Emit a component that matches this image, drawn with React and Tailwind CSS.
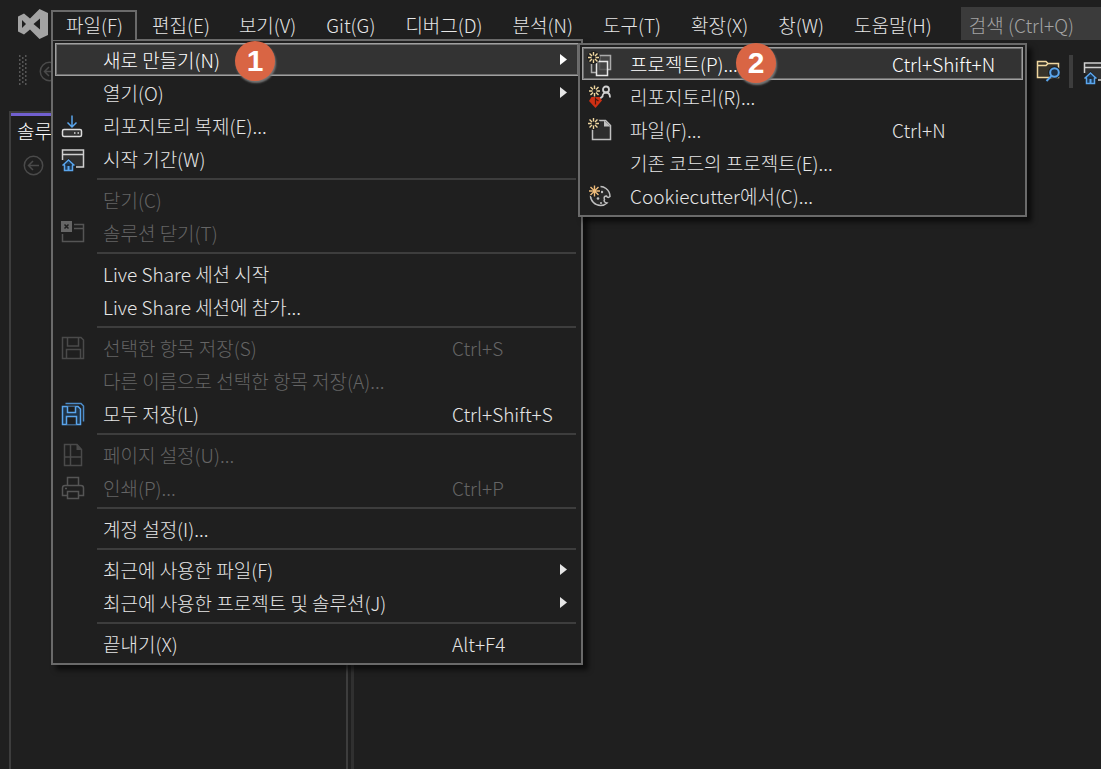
import clsx from "clsx";

const Icon = ({ children, className }) => (
  <svg
    viewBox="0 0 25 25"
    fill="none"
    strokeWidth="1.5"
    aria-hidden="true"
    className={clsx("h-[25px] w-[25px] shrink-0 overflow-visible", className)}
  >
    {children}
  </svg>
);

const Spark = ({ cx, cy, color = "#f0d7a0" }) => (
  <g transform={`translate(${cx} ${cy})`} stroke={color} strokeWidth="1.4">
    <circle r="6.5" fill="#1f1f1f" stroke="none" />
    <path d="M0-5.500V-2M0 5.500V2M-5.500 0H-2M5.500 0H2M-4-4-1.500-1.500M4 4 1.500 1.500M-4 4-1.500 1.500M4-4 1.500-1.500" />
  </g>
);

const CloneIcon = () => (
  <Icon>
    <path d="M11 2.500V14M6.500 9.500 11 14l4.500-4.500" stroke="#5aa5ec" />
    <rect x="1.500" y="16.500" width="19" height="7" rx="1.500" fill="#333" stroke="#dcdcdc" />
    <path d="M13 20h1.500M16.500 20H18" stroke="#dcdcdc" />
  </Icon>
);

const StartWindowIcon = () => (
  <Icon>
    <path d="M1.500 14V4h21v17H15" fill="#303030" stroke="#d0d0d0" />
    <path d="M1.500 8.500h21" stroke="#d0d0d0" />
    <path d="M7.500 12 0 19.500V25h15v-5.500z" fill="#1f1f1f" />
    <path d="M1.500 19.500l6-5.500 6 5.500M3.500 18.500v6h8v-6" fill="#1d3a58" stroke="#5aa5ec" />
    <path d="M7.500 24.500V20" stroke="#5aa5ec" strokeWidth="2" />
  </Icon>
);

const CloseSolutionIcon = () => (
  <Icon>
    <path d="M13 4.500h9.500v17h-21V14M13 8.500h9.500" stroke="#555" />
    <rect y="1" width="11" height="11" fill="#666" />
    <path d="M3.500 4.500l4 4M7.500 4.500l-4 4" stroke="#1f1f1f" />
  </Icon>
);

const SaveIcon = () => (
  <Icon>
    <path
      d="M1.500 2.500H20l2.500 2.500v18.500h-21zM6.500 2.500V11h11V2.500M5.500 23.500V14.500h14v9"
      stroke="#4a4a4a"
    />
  </Icon>
);

const SaveAllIcon = () => (
  <Icon>
    <path d="M4.500 2.500H20l2.500 2.500v15.500" stroke="#4c8cc9" />
    <path d="M1.500 5.500H17l2.500 2.500v15.500h-18z" fill="#1f3448" stroke="#5aa5ec" />
    <path d="M6.500 5.500v6h8v-6M5.500 23.500v-8h10v8" fill="#1f1f1f" stroke="#5aa5ec" />
  </Icon>
);

const PageSetupIcon = () => (
  <Icon>
    <path d="M3.500 2.500H16l4.500 5v16h-17zM9.500 2.500v21M3.500 15h17" stroke="#4a4a4a" />
    <path d="M15.500 2.500v5.500h5z" fill="#4a4a4a" />
  </Icon>
);

const PrintIcon = () => (
  <Icon>
    <path d="M6.500 10.500v-8h11v8" stroke="#555" />
    <path
      d="M6.500 20.500h-5V13a2.500 2.500 0 0 1 2.500-2.500h16a2.500 2.500 0 0 1 2.500 2.500v7.500h-5"
      stroke="#555"
    />
    <rect x="6.500" y="16.500" width="11" height="7" stroke="#555" />
    <path d="M4 13.500h2" stroke="#555" />
  </Icon>
);

const NewProjectIcon = () => (
  <Icon>
    <path d="M3.500 13v8.500h5" stroke="#aaa" />
    <rect x="11.500" y="4.500" width="11" height="14" fill="#444" stroke="#aaa" />
    <rect x="8.500" y="10.500" width="11" height="14" fill="#444" fillOpacity=".8" stroke="#e6e6e6" />
    <Spark cx={5.5} cy={6.5} />
  </Icon>
);

const NewRepoIcon = () => (
  <Icon>
    <circle cx="18" cy="5.500" r="3" stroke="#d0d0d0" strokeWidth="1.800" />
    <path d="M22 13.500c0-3.500-1.500-5-4-5-2 0-3.500 2-3.500 4l-2.500 2" stroke="#d0d0d0" strokeWidth="1.800" />
    <Spark cx={6.5} cy={7} />
    <path d="M3.500 13h8l2.500 3.500-6.500 7.500L1 17z" fill="#cf3014" />
    <path d="M7.500 13.500v7M7.500 15l3 2" stroke="#4b170e" strokeWidth="1.200" />
  </Icon>
);

const NewFileIcon = () => (
  <Icon>
    <path d="M4.500 11V22.500h18V8.500l-5-5H9" fill="#2d2d2d" stroke="#c0c0c0" />
    <path d="M16 3.500v6h6.500z" fill="#c0c0c0" />
    <Spark cx={5.5} cy={6.5} />
  </Icon>
);

const CookieIcon = () => (
  <Icon>
    <path
      d="M12.500 3.500c2 0 4 .8 5.500 2 2.500 2 4 4.500 4 8-1.500 1.500-3 1-3.500-.5-2 0-3 1.500-2 3.500-1 1.500 0 3 2.500 3.500-2 2-4 2.500-6.500 2.500a10 10 0 0 1-10-10"
      fill="#292929"
      stroke="#c0c0c0"
    />
    <circle cx="10" cy="15.500" r="1.300" fill="#c0c0c0" />
    <circle cx="14" cy="9" r="1.200" fill="#c0c0c0" />
    <circle cx="13" cy="20" r="1" fill="#c0c0c0" />
    <Spark cx={6.5} cy={8} color="#f0bd7c" />
    <circle cx="6.500" cy="8" r="2.200" fill="#f0bd7c" />
  </Icon>
);

const FolderSearchIcon = () => (
  <Icon>
    <path d="M1.500 2.500H10l2 2h10.500v14h-21z" fill="#37332a" stroke="#f0d7a0" />
    <path d="M1.500 6.500H10l2-2" stroke="#f0d7a0" />
    <circle cx="18.500" cy="13.500" r="6.500" fill="#1f1f1f" />
    <circle cx="18.500" cy="13.500" r="4.300" fill="#1d3045" stroke="#5aa5ec" strokeWidth="2" />
    <path d="M15.500 17 10.500 22" stroke="#5aa5ec" strokeWidth="2" />
  </Icon>
);

const BackIcon = () => (
  <Icon className="text-[#4a4a4a]">
    <circle cx="12.500" cy="12.500" r="9.200" stroke="currentColor" />
    <path d="M18 12.500H7.500M12 8l-4.500 4.500L12 17" stroke="currentColor" />
  </Icon>
);

const Logo = () => (
  <svg viewBox="0 0 30 30" className="h-[30px] w-[30px] shrink-0" aria-hidden="true">
    <path
      fill="#a3a3a3"
      fillRule="evenodd"
      d="M21.500 0 30 4v22l-8.500 4L12 20.500 6 25.500 0 22.500v-15L6 4.500 12 9.500zM4 11v8l4-4zM22 9.500 15.500 15 22 20.500z"
    />
  </svg>
);

const MENUS = [
  "파일(F)",
  "편집(E)",
  "보기(V)",
  "Git(G)",
  "디버그(D)",
  "분석(N)",
  "도구(T)",
  "확장(X)",
  "창(W)",
  "도움말(H)",
];

const FILE_MENU = [
  [
    { label: "새로 만들기(N)", submenu: true, active: true, badge: 1 },
    { label: "열기(O)", submenu: true },
    { label: "리포지토리 복제(E)...", icon: <CloneIcon /> },
    { label: "시작 기간(W)", icon: <StartWindowIcon /> },
  ],
  [
    { label: "닫기(C)", disabled: true },
    { label: "솔루션 닫기(T)", disabled: true, icon: <CloseSolutionIcon /> },
  ],
  [{ label: "Live Share 세션 시작" }, { label: "Live Share 세션에 참가..." }],
  [
    { label: "선택한 항목 저장(S)", keys: "Ctrl+S", disabled: true, icon: <SaveIcon /> },
    { label: "다른 이름으로 선택한 항목 저장(A)...", disabled: true },
    { label: "모두 저장(L)", keys: "Ctrl+Shift+S", icon: <SaveAllIcon /> },
  ],
  [
    { label: "페이지 설정(U)...", disabled: true, icon: <PageSetupIcon /> },
    { label: "인쇄(P)...", keys: "Ctrl+P", disabled: true, icon: <PrintIcon /> },
  ],
  [{ label: "계정 설정(I)..." }],
  [
    { label: "최근에 사용한 파일(F)", submenu: true },
    { label: "최근에 사용한 프로젝트 및 솔루션(J)", submenu: true },
  ],
  [{ label: "끝내기(X)", keys: "Alt+F4" }],
];

const NEW_MENU = [
  { label: "프로젝트(P)...", keys: "Ctrl+Shift+N", icon: <NewProjectIcon />, active: true, badge: 2 },
  { label: "리포지토리(R)...", icon: <NewRepoIcon /> },
  { label: "파일(F)...", keys: "Ctrl+N", icon: <NewFileIcon /> },
  { label: "기존 코드의 프로젝트(E)..." },
  { label: "Cookiecutter에서(C)...", icon: <CookieIcon /> },
];

const MenuItem = ({ item, nested }) => (
  <li className="relative">
    <button
      disabled={item.disabled}
      className={clsx(
        "flex h-[33px] w-full items-center border pl-[5px] text-left whitespace-nowrap",
        item.active
          ? "border-[#a0a0a0] bg-[#333333] text-white inset-ring inset-ring-[#6e6e6e]"
          : "border-transparent",
        item.disabled && "text-[#656565]"
      )}
    >
      <span className="h-[25px] w-[42px] shrink-0">{item.icon}</span>
      <span className={clsx("shrink-0", nested ? "w-[262px]" : "w-[349px]")}>
        {item.label}
      </span>
      <span>{item.keys}</span>
      {item.submenu && (
        <svg viewBox="0 0 7 11" className="mr-[11px] ml-auto h-[11px] w-[7px]" aria-hidden="true">
          <path d="M0 0 7 5.500 0 11z" fill="currentColor" />
        </svg>
      )}
    </button>
    {item.badge && (
      <span
        className={clsx(
          "absolute z-10 flex h-10 w-10 items-center justify-center rounded-full bg-[#d96544] font-['Liberation_Sans'] text-3xl font-bold text-white shadow-[1px_2px_2px_#777]",
          nested ? "-top-1 left-[154px]" : "-top-[2px] left-[180px]"
        )}
      >
        {item.badge}
      </span>
    )}
  </li>
);

const panel =
  "absolute border-2 border-[#6a6a6a] bg-[#1f1f1f] p-[2px] pb-[3px] shadow-[5px_5px_5px_rgba(0,0,0,0.6)]";

export default function App() {
  return (
    <div className="relative flex min-h-screen flex-col overflow-hidden bg-[#1f1f1f] font-['Noto_Sans_CJK_KR',sans-serif] text-[19px] leading-6 font-light text-[#e6e6e6]">
      <header className="flex h-10 items-end">
        <div className="flex w-[51px] shrink-0 justify-end self-start pt-[9px] pr-[3px]">
          <Logo />
        </div>
        <nav className="flex shrink-0">
          {MENUS.map((name, i) => (
            <button
              key={name}
              className={clsx(
                "h-[30px] border-2 border-b-0 pb-[2px] pl-[13px] whitespace-nowrap",
                i < 2 ? "pr-3" : "pr-[13px]",
                i === 0 ? "relative z-20 border-[#6a6a6a] bg-[#1f1f1f]" : "border-transparent"
              )}
            >
              {name}
            </button>
          ))}
        </nav>
        <input
          aria-label="검색"
          placeholder="검색 (Ctrl+Q)"
          className="ml-[14px] h-[33px] min-w-0 flex-1 bg-[#3b3b3b] px-2 pt-[2px] outline-none placeholder:text-[#a3a3a3]"
        />
      </header>

      <div className="flex h-[71px] shrink-0 items-start pt-[15px] pl-[18px]">
        <svg viewBox="0 0 10 30" className="h-[30px] w-[10px]" aria-hidden="true">
          {[0, 4, 8, 12, 16, 20, 24, 28].map((y) => (
            <path key={y} d={`M1 ${y + 1}h1.500M7 ${y + 1}h1.500M4 ${y + 3}h1.500`} stroke="#6a6a6a" strokeWidth="1.300" />
          ))}
        </svg>
        <button aria-label="뒤로" className="mt-1 ml-[9px]">
          <BackIcon />
        </button>
        <div className="-mr-[7px] ml-auto flex shrink-0 items-start">
          <button aria-label="폴더에서 찾기" className="mt-1">
            <FolderSearchIcon />
          </button>
          <span className="ml-2 h-[33px] w-1 bg-[#3d3d3d]" />
          <button aria-label="시작 창" className="mt-1 ml-[10px]">
            <StartWindowIcon />
          </button>
        </div>
      </div>

      <main className="flex flex-1 pl-[9px]">
        <aside className="w-[339px] border-2 border-b-0 border-[#3d3d3d]">
          <h2 className="border-t-[3px] border-[#7160d0] pt-[3px] pl-[6px] text-white">솔루</h2>
          <button aria-label="뒤로" className="mt-[10px] ml-[10px]">
            <BackIcon />
          </button>
        </aside>
        <div className="ml-[3px] flex-1 border-l-[3px] border-[#303030]" />
      </main>

      <ul className={clsx(panel, "top-[39px] left-[51px] z-10 w-[532px]")}>
        {FILE_MENU.map((group, i) => (
          <li key={i}>
            {i > 0 && <hr className="my-[3px] mr-[3px] ml-[42px] border-t-2 border-[#3d3d3d]" />}
            <ul>
              {group.map((item) => (
                <MenuItem key={item.label} item={item} />
              ))}
            </ul>
          </li>
        ))}
      </ul>

      <ul className={clsx(panel, "top-[43px] left-[578px] z-20 w-[449px]")}>
        {NEW_MENU.map((item) => (
          <MenuItem key={item.label} item={item} nested />
        ))}
      </ul>
    </div>
  );
}
